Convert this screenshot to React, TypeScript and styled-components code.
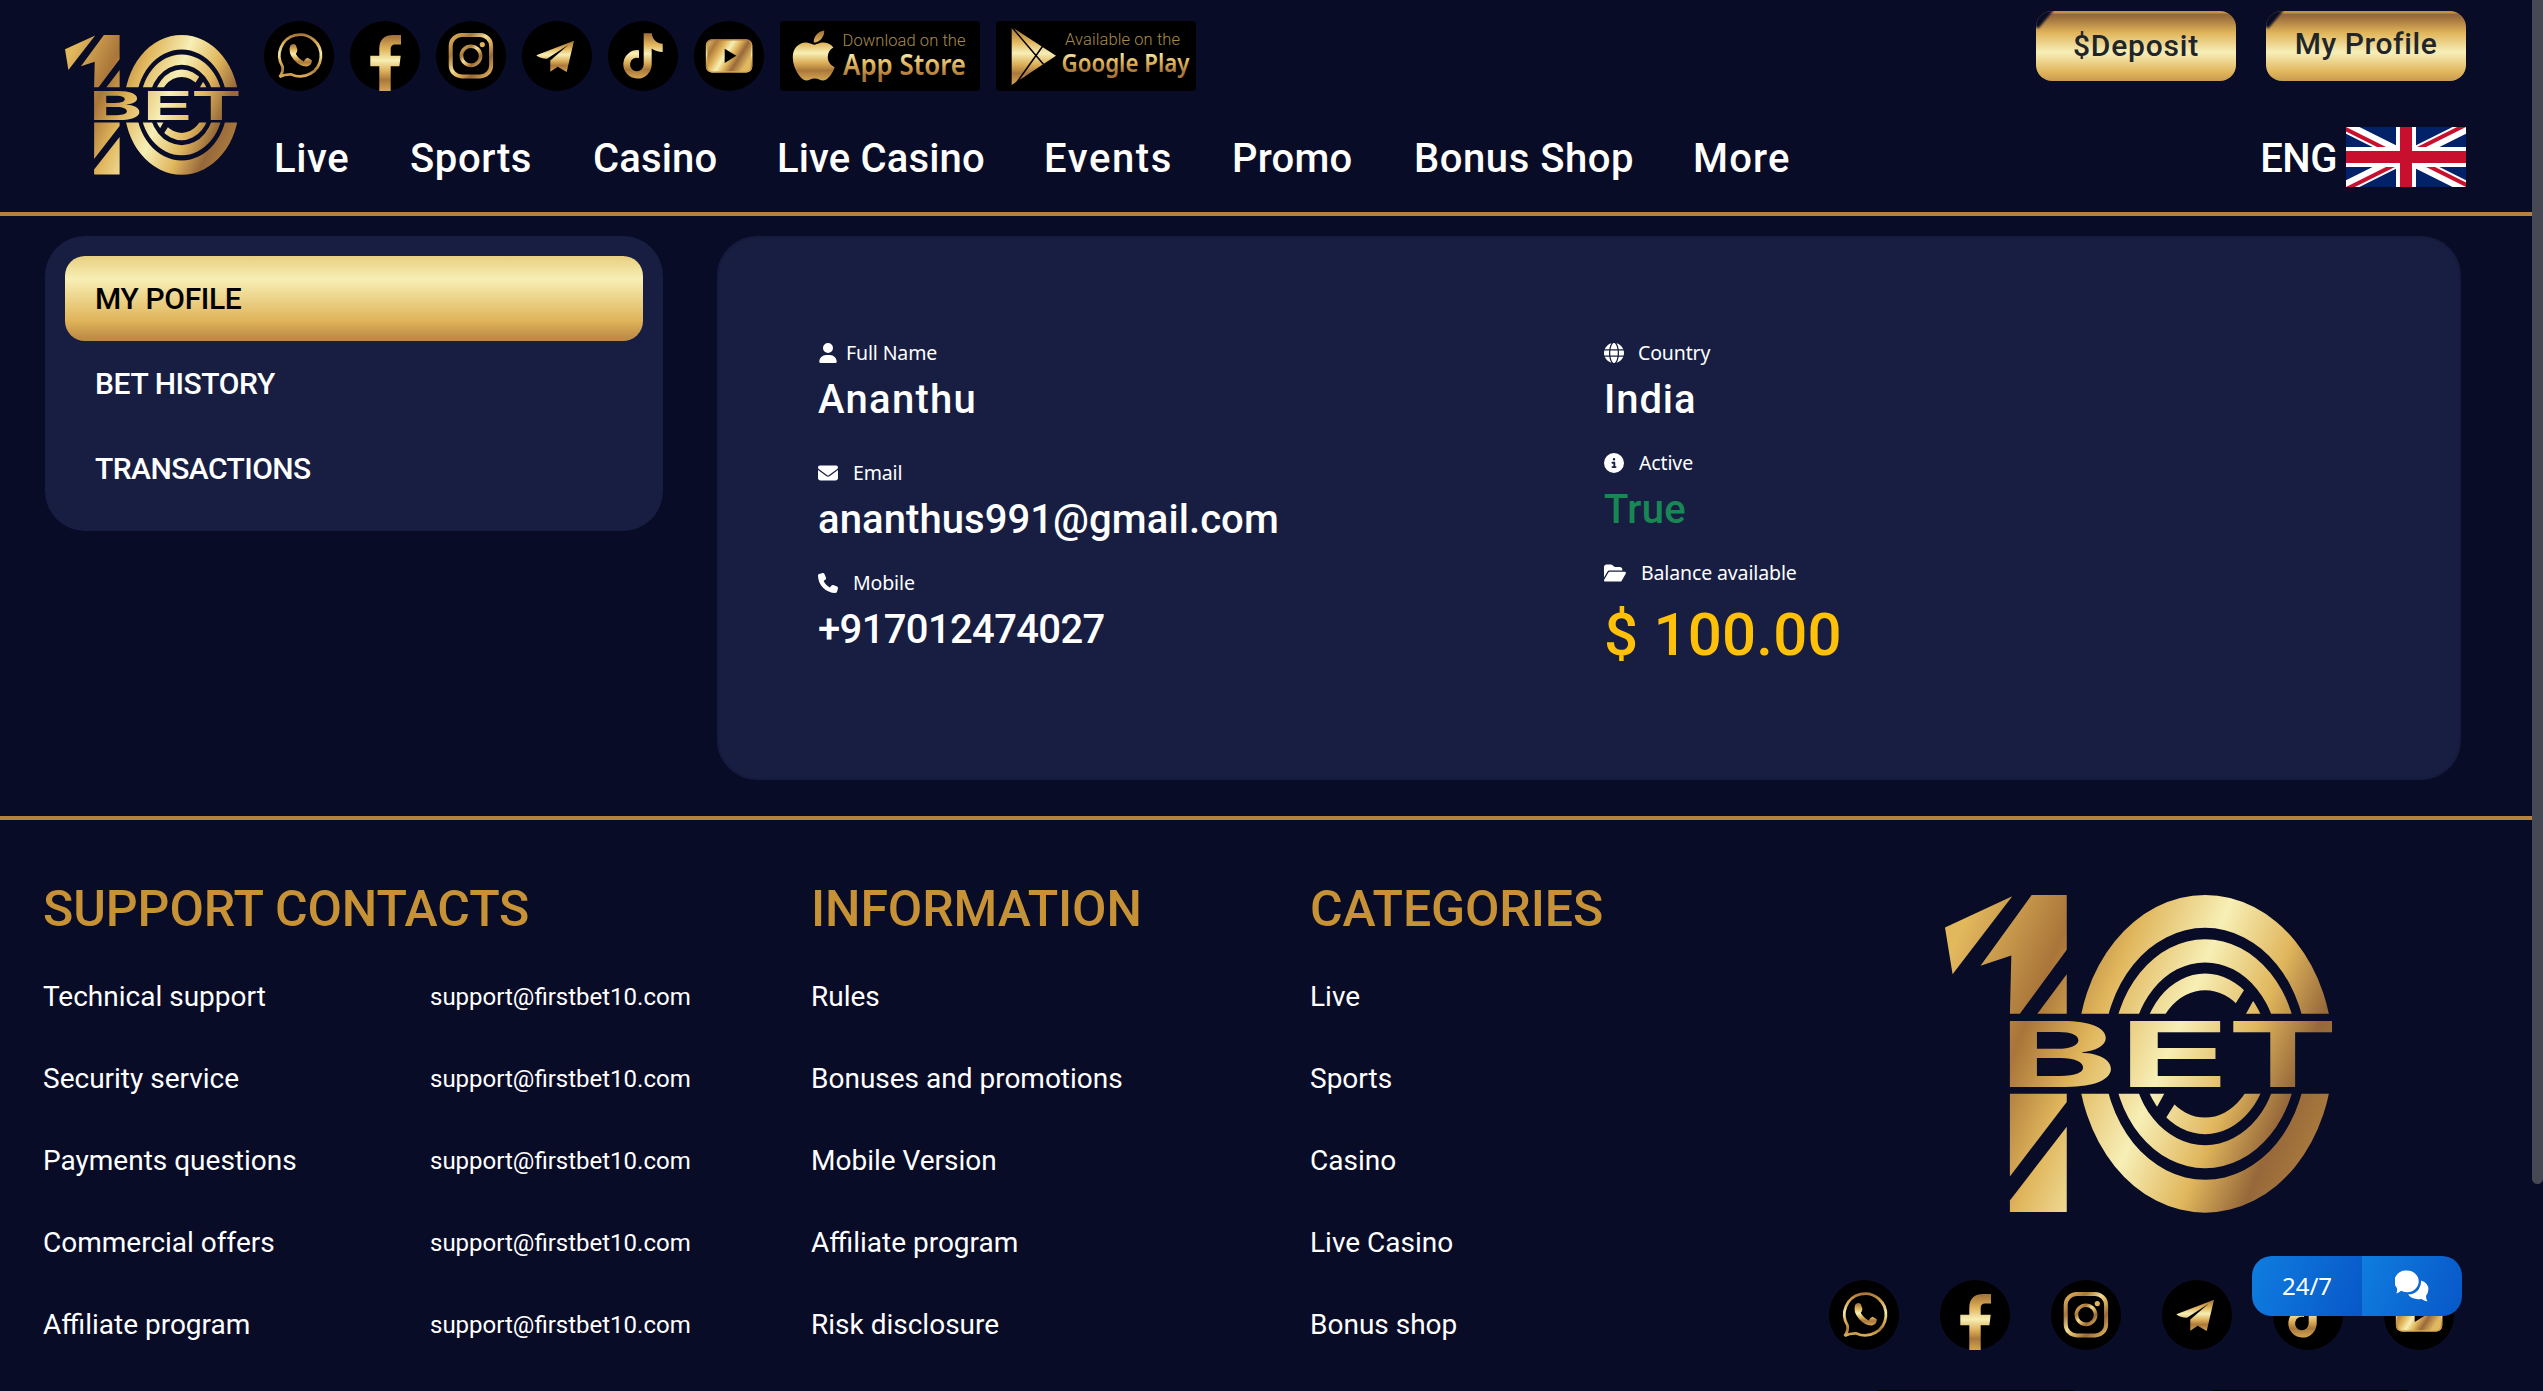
import React from "react";
import styled, { createGlobalStyle, css } from "styled-components";
import {
  FaUser, FaEnvelope, FaPhone, FaGlobe, FaCircleInfo, FaFolderOpen, FaApple,
} from "react-icons/fa6";

const C = {
  bg: "#090c26", panel: "#171e42", line: "#b5823d", heading: "#c79135",
};

const Global = createGlobalStyle`
  * { box-sizing: border-box; }
  html, body { margin: 0; padding: 0; background: ${C.bg}; overflow: hidden; }
  body { color: #fff; font-family: Roboto, "Liberation Sans", sans-serif; }
`;

const Screen = styled.div`
  display: flex; width: 2543px; height: 1391px; overflow: hidden; background: ${C.bg};
`;
const Page = styled.div`
  width: 2532px; height: 1391px; overflow: hidden; display: flex; flex-direction: column;
`;
const ScrollTrack = styled.div`width: 11px; height: 1391px; background: ${C.bg};`;
const ScrollThumb = styled.div`
  height: 1184px; background: #464953; border-radius: 0 0 6px 6px;
`;

const Header = styled.header`
  flex: none; height: 216px; border-bottom: 4px solid ${C.line};
  display: flex; padding: 0 66px 0 65px;
`;
const HeaderLogo = styled.div`width: 174px; height: 140px; margin-top: 35px;`;
const HeaderMain = styled.div`flex: 1; margin-left: 25px; padding-top: 21px;`;
const BadgeRow = styled.div`display: flex; gap: 16px; height: 70px;`;
const Nav = styled.nav`
  display: flex; margin-top: 38px; padding-left: 10px;
`;
const NavLink = styled.a<{ $w: number; $track: number }>`
  width: ${(p) => p.$w}px; letter-spacing: ${(p) => p.$track}px;
  font-size: 40px; font-weight: 500; line-height: 60px; white-space: nowrap;
`;
const HeaderSide = styled.div`
  display: flex; flex-direction: column; align-items: flex-end; padding-top: 11px;
`;
const ButtonRow = styled.div`display: flex; gap: 30px;`;
const GoldButton = styled.button<{ $lift: number; $track: number }>`
  position: relative; width: 200px; height: 70px; border: 0; border-radius: 16px;
  padding: 0 0 ${(p) => p.$lift}px 0; overflow: hidden; color: #212529;
  font: 500 30px/40px Roboto, sans-serif; letter-spacing: ${(p) => p.$track}px;
  background: linear-gradient(180deg, #c4934a 0%, #c4934a 2%, #966839 5%, #9c6e3c 9%,
    #e0b45a 31%, #f7efb8 59%, #e0b45a 88%, #c89c50 100%);
  &::before {
    content: ""; position: absolute; left: -12px; top: -13px; width: 24px; height: 26px;
    background: ${C.bg}; transform: rotate(-50deg); filter: blur(0.8px);
  }
`;
const Language = styled.div`
  display: flex; gap: 9px; margin-top: 46px; letter-spacing: -0.5px;
  font-size: 40px; font-weight: 500; line-height: 64px;
`;

const Main = styled.main`
  flex: none; height: 600px; display: flex; align-items: flex-start; padding: 20px 71px 0 45px; gap: 54px;
`;
const Sidebar = styled.aside`
  width: 618px; height: 295px; padding: 20px; border-radius: 40px; background: ${C.panel};
`;
const SideItem = styled.div<{ $active?: boolean; $track: number }>`
  height: 85px; padding: 0 30px; border-radius: 20px; font-size: 30px; font-weight: 500; line-height: 85px;
  letter-spacing: ${(p) => p.$track}px;
  ${(p) => p.$active && css`
    color: #000;
    background: linear-gradient(180deg, #e8cf80 0%, #f7efb5 27%, #e0b45a 76%, #bf8f47 95%, #bb8b45 100%);
  `}
`;
const Profile = styled.section`
  flex: 1; height: 544px; border-radius: 40px; border: 2px solid #151b3c; background: ${C.panel};
  display: grid; grid-template-columns: 786px 1fr; padding: 102px 0 0 99px;
`;
const Fields = styled.div`display: flex; flex-direction: column;`;
const Field = styled.div<{ $h: number }>`height: ${(p) => p.$h}px;`;
const FieldLabel = styled.div<{ $gap: number }>`
  display: flex; align-items: center; gap: ${(p) => p.$gap}px; height: 26px;
  font: 400 19.5px/26px "Noto Sans", sans-serif; letter-spacing: -0.13px;
  svg { flex: none; }
`;
const FieldValue = styled.div<{ $color?: string; $track: number }>`
  margin-top: 4px; white-space: nowrap; font-weight: 500; color: ${(p) => p.$color || "#fff"};
  font-size: 40px; line-height: 60px; letter-spacing: ${(p) => p.$track}px;
`;
const Balance = styled(FieldValue)`font-size: 60px; line-height: 72px; margin-top: 13px;`;

const Footer = styled.footer`
  flex: 1; border-top: 4px solid ${C.line}; display: grid;
  grid-template-columns: 387px 381px 499px 519px 1fr; padding-left: 43px;
`;
const FooterCol = styled.div`padding-top: 57px; white-space: nowrap;`;
const FooterTitle = styled.h3<{ $track?: number }>`
  margin: 0; height: 64px; font-size: 50px; font-weight: 500; line-height: 64px; color: ${C.heading};
  letter-spacing: ${(p) => p.$track || 0}px;
`;
const FooterLink = styled.a<{ $small?: boolean }>`
  display: block; height: 82px; line-height: 82px; font-size: ${(p) => (p.$small ? 24 : 28)}px;
`;
const FooterLinks = styled.div`margin-top: 15px;`;
const FooterBrand = styled.div`display: flex; flex-direction: column; padding-top: 75px;`;
const FooterLogo = styled.div`width: 388px; height: 318px; margin-left: 116px;`;
const FooterSocial = styled.div`display: flex; gap: 41px; margin-top: 67px; height: 70px;`;
const FooterStores = styled.div`
  display: flex; gap: 134px; margin: 40px 0 0 47px; height: 70px;
`;
const StoreBadge = styled.div`width: 200px; height: 70px; border-radius: 4px; background: #000;`;

const Widget = styled.div`
  position: fixed; left: 2252px; top: 1256px; width: 210px; height: 60px; display: flex;
  border-radius: 20px; overflow: hidden;
`;
const WidgetPart = styled.div<{ $w: number }>`
  width: ${(p) => p.$w}px; display: flex; align-items: center; justify-content: center;
  background: linear-gradient(110deg, #0f7de0, #0857c8); font: 400 24px/58px "Noto Sans", sans-serif;
`;

const HiddenSvg = styled.svg`position: absolute;`;

const Defs = () => (
  <HiddenSvg width="0" height="0">
    <defs>
      <linearGradient id="gold-v" x1="0" y1="0" x2="0" y2="1">
        <stop offset="0" stopColor="#a06f38" /><stop offset="0.25" stopColor="#e0b45a" />
        <stop offset="0.45" stopColor="#f7efb5" /><stop offset="0.65" stopColor="#dcae57" />
        <stop offset="0.8" stopColor="#aa783b" /><stop offset="1" stopColor="#d3a552" />
      </linearGradient>
      <linearGradient id="gold-ring" x1="0" y1="0" x2="0" y2="1">
        <stop offset="0" stopColor="#a9773b" /><stop offset="0.2" stopColor="#d9ab55" />
        <stop offset="0.45" stopColor="#f5eaae" /><stop offset="0.65" stopColor="#dcae57" />
        <stop offset="0.85" stopColor="#b07f3f" /><stop offset="1" stopColor="#dcae57" />
      </linearGradient>
      <linearGradient id="gold-d" x1="0" y1="0" x2="1" y2="0.45">
        <stop offset="0" stopColor="#e8cb7c" /><stop offset="0.22" stopColor="#ad7a3c" />
        <stop offset="0.38" stopColor="#e0b45a" /><stop offset="0.52" stopColor="#f7efb5" />
        <stop offset="0.66" stopColor="#dfb25a" /><stop offset="0.8" stopColor="#99693a" />
        <stop offset="1" stopColor="#e0b860" />
      </linearGradient>
      <linearGradient id="gold-insta" x1="0" y1="0" x2="1" y2="1">
        <stop offset="0" stopColor="#e0b45a" /><stop offset="0.25" stopColor="#aa783b" />
        <stop offset="0.45" stopColor="#f0dc96" /><stop offset="0.6" stopColor="#d9ab55" />
        <stop offset="0.75" stopColor="#99693a" /><stop offset="1" stopColor="#e0b45a" />
      </linearGradient>
      <linearGradient id="gold-text" x1="0" y1="0" x2="0" y2="1">
        <stop offset="0.2" stopColor="#f7efb5" /><stop offset="0.5" stopColor="#e0b45a" />
        <stop offset="0.8" stopColor="#a9753a" />
      </linearGradient>
      <linearGradient id="gold-logo" gradientUnits="userSpaceOnUse" x1="367" y1="110" x2="1284" y2="385">
        <stop offset="0" stopColor="#e2b85d" /><stop offset="0.22" stopColor="#a97539" />
        <stop offset="0.365" stopColor="#e0b65c" /><stop offset="0.545" stopColor="#f7efb6" />
        <stop offset="0.71" stopColor="#e0b65c" /><stop offset="0.842" stopColor="#96683a" />
        <stop offset="1" stopColor="#b5843f" />
      </linearGradient>
      <clipPath id="zero-halves">
        <rect x="560" y="90" width="600" height="362" />
        <rect x="560" y="688" width="600" height="362" />
      </clipPath>
    </defs>
  </HiddenSvg>
);

/* Ring between two concentric ellipses, cut with the even-odd rule */
const ring = (rx: number, ry: number, ix: number, iy: number) => {
  const e = (a: number, b: number) =>
    `M${854 - a} 570A${a} ${b} 0 1 1 ${854 + a} 570A${a} ${b} 0 1 1 ${854 - a} 570Z`;
  return e(rx, ry) + e(ix, iy);
};

const Logo = () => (
  <svg width="100%" height="100%" viewBox="305 101 819 939" preserveAspectRatio="none" display="block" overflow="visible">
    <g fill="url(#gold-logo)">
      <polygon points="305,197 447,105 321,335" />
      <polygon points="488,101 562,101 562,263 463,452 442,452 445,280 380,310" />
      <polygon points="562,335 562,452 500,452" />
      <polygon points="442,688 562,688 562,712 442,932" />
      <polygon points="562,785 562,1037 442,1037 442,1003" />
    </g>
    <path d={ring(134.6, 237, 107, 188)} fill="url(#gold-logo)" fillRule="evenodd" clipPath="url(#zero-halves)" />
    <g fill={C.bg}>
      <polygon points="952,345 973,369 939,455 903,455 936,382" />
      <polygon points="756,795 735,771 769,685 805,685 772,758" />
    </g>
    <g fill="url(#gold-logo)" fillRule="evenodd" clipPath="url(#zero-halves)">
      <path d={ring(270, 469, 214.5, 372)} />
      <path d={ring(195, 338, 155, 270)} />
    </g>
    <g fill="url(#gold-logo)" fontFamily="Inter, sans-serif" fontWeight="700" fontSize="266">
      <text x="417" y="668" textLength="253" lengthAdjust="spacingAndGlyphs">B</text>
      <text x="670" y="668" textLength="237" lengthAdjust="spacingAndGlyphs">E</text>
      <text x="901" y="668" textLength="234" lengthAdjust="spacingAndGlyphs">T</text>
    </g>
  </svg>
);

type IconName = "whatsapp" | "facebook" | "instagram" | "telegram" | "tiktok" | "youtube";
const glyphs: Record<IconName, React.ReactNode> = {
  whatsapp: (
    <>
      <path d="M18.5 45.5A20.8 20.8 0 1 1 27.5 53.4Q21 53 15.6 55.8Q19.6 51 18.5 45.5Z" fill="none" stroke="url(#gold-ring)" strokeWidth="2.8" />
      <path d="M26.2 24.8Q28.6 21.8 31.8 24L33.4 28.8Q33.4 31 31.8 32.8Q34.4 38 39.8 40.4Q41 37.4 43.6 36.8L47.8 39.2Q48.4 44 43 45.4Q36 45.8 29.8 38.8Q23.8 31.6 26.2 24.8Z" fill="url(#gold-v)" />
    </>
  ),
  facebook: (
    <path fill="url(#gold-v)" d="M29.3 70V45.3H20.3V34.7H29.3V28C29.3 18 35 14 43 14H51V23.5H45.5C42 23.5 40.7 25 40.7 28.5V34.7H50.7L49.4 45.3H40.7V70Z" />
  ),
  instagram: (
    <>
      <rect x="14.7" y="14" width="40.4" height="41.4" rx="11" fill="none" stroke="url(#gold-insta)" strokeWidth="4" />
      <circle cx="35" cy="34.8" r="9.6" fill="none" stroke="url(#gold-insta)" strokeWidth="3.6" />
      <circle cx="46.3" cy="23.6" r="2.6" fill="#e0b45a" />
    </>
  ),
  telegram: (
    <path fill="url(#gold-v)" d="M52 19.7L14.3 34.3Q18 37.6 25 37.8L46.5 23.8L28.3 39.6V50.7L35.7 45.7L44.7 51Z" />
  ),
  tiktok: (
    <path fill="url(#gold-v)" d="M35.7 12.3H43.7C44.5 18 48 22.7 54.7 22.7V31C50.5 31 46.5 29.5 43.7 27.5V43.5A14.2 14.2 0 1 1 31 29.2V37A6.8 6.8 0 1 0 35.7 43.5Z" />
  ),
  youtube: (
    <>
      <rect x="11.9" y="18.2" width="46.4" height="33.4" rx="6" fill="url(#gold-d)" />
      <rect x="12.6" y="18.9" width="45" height="32" rx="5.5" fill="none" stroke="url(#gold-ring)" strokeWidth="1.4" />
      <path d="M30.7 27.7L42.3 34.8L30.7 42Z" fill="#000" />
    </>
  ),
};
const iconNames = Object.keys(glyphs) as IconName[];

const SocialIcon = ({ name }: { name: IconName }) => (
  <svg width="70" height="70" viewBox="0 0 70 70">
    <circle cx="35" cy="35" r="35" fill="#000" />
    {glyphs[name]}
  </svg>
);

const AppStore = () => (
  <svg width="200" height="70" viewBox="0 0 200 70" overflow="visible">
    <rect width="200" height="70" rx="4" fill="#000" />
    <FaApple x="5.2" y="6" size={57} style={{ fill: "url(#gold-v)" }} />
    <text x="62.5" y="25" fontFamily="Roboto" fontWeight="300" fontSize="16.5" fill="#a88b4c" textLength="123">Download on the</text>
    <text x="63" y="54.3" fontFamily="Noto Sans" fontWeight="600" fontSize="28" fill="url(#gold-text)" textLength="123" lengthAdjust="spacingAndGlyphs">App Store</text>
  </svg>
);
const GooglePlay = () => (
  <svg width="200" height="70" viewBox="0 0 200 70" overflow="visible">
    <rect width="200" height="70" rx="4" fill="#000" />
    <path d="M15.7 6L60 34.8L15.7 64Z" fill="url(#gold-v)" />
    <path d="M15.7 6L48.5 44.5M19 64L47.5 24" stroke="#000" strokeWidth="1.5" />
    <text x="69" y="24.3" fontFamily="Roboto" fontWeight="300" fontSize="16.5" fill="#a88b4c" textLength="115">Available on the</text>
    <text x="65.5" y="51" fontFamily="Noto Sans" fontWeight="600" fontSize="25.5" fill="url(#gold-text)" textLength="128" lengthAdjust="spacingAndGlyphs">Google Play</text>
  </svg>
);

const Flag = () => (
  <svg width="120" height="60" viewBox="0 0 60 30" display="block">
    <clipPath id="uk"><path d="M30 15h30v15zv15H0zH0V0zV0h30z" /></clipPath>
    <rect width="60" height="30" fill="#012169" />
    <path d="M0 0L60 30M60 0L0 30" stroke="#fff" strokeWidth="6" />
    <path d="M0 0L60 30M60 0L0 30" clipPath="url(#uk)" stroke="#c8102e" strokeWidth="4" />
    <path d="M30 0V30M0 15H60" stroke="#fff" strokeWidth="10" />
    <path d="M30 0V30M0 15H60" stroke="#c8102e" strokeWidth="6" />
  </svg>
);

/* Round bubble in front, crescent-shaped bubble tucked behind at lower right */
const ChatIcon = () => (
  <svg width="34" height="32" viewBox="0 0 34 32" fill="#fff">
    <path d="M12 0.5A11.7 10.8 0 0 1 12 22.2Q8.4 22.2 6 20.8Q4.4 22.6 1.4 23.6Q2.4 20.6 2 18A11.7 10.8 0 0 1 12 0.5Z" />
    <path d="M26.2 10.4Q33.6 13 33.4 19.6Q33.2 23.2 31 26Q31 29 32.4 31.4Q28.8 31 26.4 29Q17.4 30.2 13 24.6Q25.4 23.6 26.2 10.4Z" />
  </svg>
);

const navItems = [
  { label: "Live", w: 136, track: 0.6 },
  { label: "Sports", w: 183, track: 0.6 },
  { label: "Casino", w: 184, track: 0.15 },
  { label: "Live Casino", w: 267, track: 0.15 },
  { label: "Events", w: 188, track: 1.6 },
  { label: "Promo", w: 182, track: 0.2 },
  { label: "Bonus Shop", w: 279, track: 0.55 },
  { label: "More", w: 110, track: 1.2 },
];
const support = ["Technical support", "Security service", "Payments questions", "Commercial offers", "Affiliate program"];
const info = ["Rules", "Bonuses and promotions", "Mobile Version", "Affiliate program", "Risk disclosure"];
const cats = ["Live", "Sports", "Casino", "Live Casino", "Bonus shop"];

export default function App() {
  return (
    <Screen>
      <Global />
      <Defs />
      <Page>
        <Header>
          <HeaderLogo><Logo /></HeaderLogo>
          <HeaderMain>
            <BadgeRow>
              {iconNames.map((n) => <SocialIcon key={n} name={n} />)}
              <AppStore />
              <GooglePlay />
            </BadgeRow>
            <Nav>
              {navItems.map((n) => <NavLink key={n.label} $w={n.w} $track={n.track}>{n.label}</NavLink>)}
            </Nav>
          </HeaderMain>
          <HeaderSide>
            <ButtonRow>
              <GoldButton $lift={0} $track={0.8}>$Deposit</GoldButton>
              <GoldButton $lift={5} $track={0.6}>My Profile</GoldButton>
            </ButtonRow>
            <Language>ENG<Flag /></Language>
          </HeaderSide>
        </Header>
        <Main>
          <Sidebar>
            <SideItem $active $track={-0.35}>MY POFILE</SideItem>
            <SideItem $track={-0.4}>BET HISTORY</SideItem>
            <SideItem $track={-0.55}>TRANSACTIONS</SideItem>
          </Sidebar>
          <Profile>
            <Fields>
              <Field $h={120}>
                <FieldLabel $gap={8}><FaUser size={20} />Full Name</FieldLabel>
                <FieldValue $track={1.3}>Ananthu</FieldValue>
              </Field>
              <Field $h={110}>
                <FieldLabel $gap={15}><FaEnvelope size={20} />Email</FieldLabel>
                <FieldValue $track={0.08}>ananthus991@gmail.com</FieldValue>
              </Field>
              <Field $h={110}>
                <FieldLabel $gap={15}><FaPhone size={20} />Mobile</FieldLabel>
                <FieldValue $track={-0.65}>+917012474027</FieldValue>
              </Field>
            </Fields>
            <Fields>
              <Field $h={110}>
                <FieldLabel $gap={14}><FaGlobe size={20} />Country</FieldLabel>
                <FieldValue $track={0.9}>India</FieldValue>
              </Field>
              <Field $h={110}>
                <FieldLabel $gap={15}><FaCircleInfo size={20} />Active</FieldLabel>
                <FieldValue $track={0.3} $color="#198754">True</FieldValue>
              </Field>
              <Field $h={110}>
                <FieldLabel $gap={15}><FaFolderOpen size={22} />Balance available</FieldLabel>
                <Balance $track={0.2} $color="#ffc107">$ 100.00</Balance>
              </Field>
            </Fields>
          </Profile>
        </Main>
        <Footer>
          <FooterCol>
            <FooterTitle $track={-0.1}>SUPPORT CONTACTS</FooterTitle>
            <FooterLinks>{support.map((t) => <FooterLink key={t}>{t}</FooterLink>)}</FooterLinks>
          </FooterCol>
          <FooterCol>
            <FooterTitle />
            <FooterLinks>{support.map((t) => <FooterLink $small key={t}>support@firstbet10.com</FooterLink>)}</FooterLinks>
          </FooterCol>
          <FooterCol>
            <FooterTitle $track={-0.1}>INFORMATION</FooterTitle>
            <FooterLinks>{info.map((t) => <FooterLink key={t}>{t}</FooterLink>)}</FooterLinks>
          </FooterCol>
          <FooterCol>
            <FooterTitle $track={-0.1}>CATEGORIES</FooterTitle>
            <FooterLinks>{cats.map((t) => <FooterLink key={t}>{t}</FooterLink>)}</FooterLinks>
          </FooterCol>
          <FooterBrand>
            <FooterLogo><Logo /></FooterLogo>
            <FooterSocial>{iconNames.map((n) => <SocialIcon key={n} name={n} />)}</FooterSocial>
            <FooterStores><StoreBadge /><StoreBadge /></FooterStores>
          </FooterBrand>
        </Footer>
      </Page>
      <ScrollTrack><ScrollThumb /></ScrollTrack>
      <Widget>
        <WidgetPart $w={110}>24/7</WidgetPart>
        <WidgetPart $w={100}><ChatIcon /></WidgetPart>
      </Widget>
    </Screen>
  );
}
